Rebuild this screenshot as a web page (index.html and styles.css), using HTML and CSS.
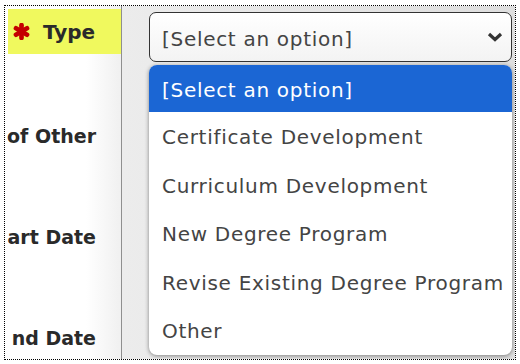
FILE: index.html
```html
<!DOCTYPE html>
<html lang="en">
<head>
    <meta charset="UTF-8">
    <title>Type</title>
    <link rel="stylesheet" href="styles.css">
</head>
<body>

<div class="frame">
    <div class="labels">
        <div class="label-row required">
            <svg class="star" width="17" height="17" viewBox="0 0 16 16">
                <g stroke="#c40000" stroke-width="4.4" stroke-linecap="round">
                    <line x1="8" y1="2" x2="8" y2="14"/>
                    <line x1="2.8" y1="5" x2="13.2" y2="11"/>
                    <line x1="2.8" y1="11" x2="13.2" y2="5"/>
                </g>
            </svg>
            <span>Type</span>
        </div>
        <div class="label-row"><span>of Other</span></div>
        <div class="label-row"><span>art Date</span></div>
        <div class="label-row"><span>nd Date</span></div>
    </div>

    <div class="fields">
        <div class="select-box">
            <span>[Select an option]</span>
            <svg class="chevron" width="16" height="10" viewBox="0 0 16 10">
                <polyline points="2,2 8,7.5 14,2" fill="none" stroke="#333" stroke-width="3.2"/>
            </svg>
        </div>

        <ul class="options">
            <li class="active">[Select an option]</li>
            <li>Certificate Development</li>
            <li>Curriculum Development</li>
            <li>New Degree Program</li>
            <li>Revise Existing Degree Program</li>
            <li>Other</li>
        </ul>
    </div>
</div>

</body>
</html>
```

FILE: styles.css
```css
body {
    margin: 0;
    background-color: #fff;
    font-family: "DejaVu Sans", "Liberation Sans", sans-serif;
}

.frame {
    margin: 5px 0 0 4px;
    width: 510px;
    height: 353px;
    border: 1px dotted #000;
    overflow: hidden;
    display: flex;
    background-color: #fff;
}

.labels {
    width: 116px;
    flex-shrink: 0;
    border-right: 1px solid #8f8f8f;
    background: linear-gradient(to right, #fff 70%, #f0f0f0);
}

.label-row {
    display: flex;
    justify-content: flex-end;
    align-items: center;
    height: 101px;
    padding-right: 25px;
    font-size: 19px;
    font-weight: bold;
    color: #2a2a2a;
    white-space: nowrap;
}

.label-row.required {
    justify-content: flex-start;
    height: 45px;
    margin: 3px 0 31px 3px;
    padding-left: 5px;
    background-color: #f0f95e;
    font-size: 20px;
}

.label-row.required span {
    margin-left: 13px;
}

.fields {
    flex: 1;
    position: relative;
    background: linear-gradient(to right, #ececec, #dedede);
}

.select-box {
    display: flex;
    align-items: center;
    justify-content: space-between;
    margin: 6px 3px 0 27px;
    padding: 3px 8px 0 12px;
    box-sizing: border-box;
    height: 50px;
    border: 1px solid #333;
    border-radius: 7px;
    background: linear-gradient(#fff, #f3f3f3);
    font-size: 20px;
    letter-spacing: 0.7px;
    color: #444;
}

.select-box .chevron {
    margin-top: -3px;
}

.options {
    position: absolute;
    top: 59px;
    left: 27px;
    right: 3px;
    margin: 0;
    padding: 0;
    list-style: none;
    background-color: #fff;
    border-radius: 8px;
    box-shadow: 0 1px 4px rgba(0, 0, 0, 0.45);
    overflow: hidden;
}

.options li {
    box-sizing: border-box;
    height: 48.5px;
    line-height: 45px;
    padding: 3px 0 0 13px;
    font-size: 20px;
    letter-spacing: 0.7px;
    color: #444;
    white-space: nowrap;
}

.options li.active {
    height: 47px;
    line-height: 44px;
    background-color: #1b66d4;
    color: #fff;
}
```
